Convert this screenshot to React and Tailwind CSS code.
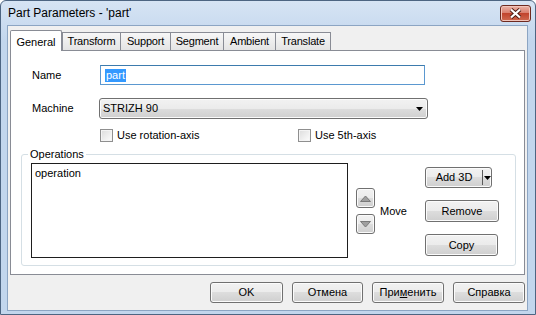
import React from "react";

const font = { fontFamily: '"Liberation Sans", Arial, sans-serif' };

const btn =
  "flex items-center justify-center rounded-[3px] border border-[#707070] bg-[linear-gradient(#f2f2f2_0%,#ebebeb_50%,#dddddd_50%,#cfcfcf_100%)] shadow-[inset_0_0_0_1px_#fbfbfb] text-[11px] text-black";

function Tab({ label, active, width }) {
  if (active) {
    return (
      <div className="relative z-10 -mb-px flex h-[21px] w-[52px] items-start justify-center rounded-t-[2px] border border-b-0 border-[#898c95] bg-white pt-[3px] text-[11px]">
        {label}
      </div>
    );
  }
  return (
    <div
      className={`-ml-px flex h-[18px] items-center justify-center border border-b-0 border-[#898c95] bg-[linear-gradient(#f7f7f7,#e4e4e4)] text-[11px] tracking-[-0.2px] first:ml-0 ${width}`}
    >
      {label}
    </div>
  );
}

function Checkbox({ label }) {
  return (
    <label className="flex h-[13px] items-center gap-[4px] text-[11px]">
      <span className="h-[13px] w-[13px] border border-[#8f8f8f] bg-[linear-gradient(135deg,#dcdcdc,#fdfdfd)] shadow-[inset_0_0_0_1px_#f4f4f4]" />
      {label}
    </label>
  );
}

function Arrow({ up }) {
  return (
    <svg width="11" height="7" viewBox="0 0 11 7">
      <path
        d={up ? "M0.5 6.5 L5.5 1 L10.5 6.5 Z" : "M0.5 0.5 L5.5 6 L10.5 0.5 Z"}
        fill="#a0a0a0"
        stroke="#7a7a7a"
        strokeWidth="1"
      />
    </svg>
  );
}

function Caret() {
  return (
    <svg width="7" height="4" viewBox="0 0 7 4">
      <path d="M0 0 H7 L3.5 4 Z" fill="#000" />
    </svg>
  );
}

export default function App() {
  return (
    <div
      className="flex h-[315px] w-[536px] flex-col rounded-t-[6px] border border-[#4d6582] bg-[linear-gradient(#d6e4f4,#c2d6ed_40px,#c2d6ed)] text-black"
      style={font}
    >
      {/* Title bar */}
      <div className="flex h-[24px] justify-between">
        <div className="pl-[7px] pt-[4px] text-[12px] leading-[16px]">Part Parameters - 'part'</div>
        <button className="mr-[4px] mt-[4px] flex h-[17px] w-[31px] items-center justify-center rounded-[3px] border border-[#6e2a20] bg-[linear-gradient(#eab3a8_0%,#d87a68_50%,#c1442d_50%,#cf6a50_100%)] shadow-[inset_0_0_0_1px_#f1c4ba]">
          <svg width="13" height="11" viewBox="0 0 13 11">
            <path
              d="M2 1.5 L6.5 5.5 L11 1.5 M2 9.5 L6.5 5.5 L11 9.5"
              stroke="#4a1a12"
              strokeWidth="4"
              fill="none"
            />
            <path
              d="M2 1.5 L6.5 5.5 L11 1.5 M2 9.5 L6.5 5.5 L11 9.5"
              stroke="#fff"
              strokeWidth="2.2"
              fill="none"
            />
          </svg>
        </button>
      </div>

      {/* Client area */}
      <div className="ml-[6px] flex h-[286px] w-[521px] flex-col border border-[#8ca5c3] bg-[#f0f0f0] pt-[4px]">
        {/* Tabs */}
        <div className="ml-[2px] flex h-[20px] items-end">
          <Tab label="General" active />
          <div className="flex">
            <Tab label="Transform" width="w-[59px]" />
            <Tab label="Support" width="w-[51px]" />
            <Tab label="Segment" width="w-[54px]" />
            <Tab label="Ambient" width="w-[53px]" />
            <Tab label="Translate" width="w-[56px]" />
          </div>
        </div>

        {/* Panel */}
        <div className="ml-[2px] flex h-[225px] w-[515px] flex-col border border-[#898c95] bg-white px-[10px] pt-[14px]">
          <div className="flex h-[20px] items-center pl-[11px]">
            <span className="w-[68px] text-[11px]">Name</span>
            <div className="flex h-[20px] w-[325px] items-center border border-[#5b98d0] border-t-[#3d7bad] pl-[4px]">
              <span className="bg-[#3399ff] px-px text-[11px] leading-[13px] text-white">part</span>
            </div>
          </div>

          <div className="mt-[13px] flex h-[21px] items-center pl-[11px]">
            <span className="w-[67px] text-[11px]">Machine</span>
            <div className="flex h-[21px] w-[329px] items-center justify-between rounded-[3px] border border-[#707070] bg-[linear-gradient(#f2f2f2_0%,#ebebeb_50%,#dddddd_50%,#cfcfcf_100%)] pl-[3px] pr-[4px] shadow-[inset_0_0_0_1px_#fbfbfb]">
              <span className="text-[11px]">STRIZH 90</span>
              <Caret />
            </div>
          </div>

          <div className="mt-[10px] flex pl-[79px]">
            <div className="w-[198px]">
              <Checkbox label="Use rotation-axis" />
            </div>
            <Checkbox label="Use 5th-axis" />
          </div>

          <fieldset className="mt-[6px] h-[118px] w-[495px] rounded-[3px] border border-[#d5dfe5]">
            <legend className="ml-[6px] px-[2px] text-[11px] leading-[13px]">Operations</legend>
            <div className="mt-[2px] flex pl-[9px]">
              <div className="h-[95px] w-[317px] border border-[#1e1e1e] pl-[3px] pt-px text-[11px]">
                operation
              </div>

              <div className="ml-[8px] flex w-[69px] items-center self-start pt-[25px]">
                <div className="flex flex-col gap-[6px]">
                  <button className={`${btn} h-[20px] w-[19px] border-[#8e8f8f]`}>
                    <Arrow up />
                  </button>
                  <button className={`${btn} h-[20px] w-[19px] border-[#8e8f8f]`}>
                    <Arrow />
                  </button>
                </div>
                <span className="ml-[5px] text-[11px]">Move</span>
              </div>

              <div className="flex flex-col items-start pt-[4px]">
                <button className={`${btn} h-[21px] w-[67px] justify-start border-[#3c3c3c]`}>
                  <span className="w-[60px] text-center">Add 3D</span>
                  <span className="h-[15px] border-l border-[#5a5a5a]" />
                  <span className="ml-[1px] flex">
                    <Caret />
                  </span>
                </button>
                <button className={`${btn} mt-[12px] h-[22px] w-[74px]`}>Remove</button>
                <button className={`${btn} mt-[12px] h-[22px] w-[73px]`}>Copy</button>
              </div>
            </div>
          </fieldset>
        </div>

        {/* Bottom buttons */}
        <div className="mt-[7px] flex justify-end gap-[9px] pr-[2px]">
          <button className={`${btn} h-[21px] w-[73px] border-[#3c7fb1] shadow-[inset_0_0_0_1px_#9edcf6]`}>OK</button>
          <button className={`${btn} h-[21px] w-[71px]`}>Отмена</button>
          <button className={`${btn} h-[21px] w-[72px]`}>
            <span>
              При<span className="underline">м</span>енить
            </span>
          </button>
          <button className={`${btn} h-[21px] w-[72px]`}>Справка</button>
        </div>
      </div>
    </div>
  );
}
